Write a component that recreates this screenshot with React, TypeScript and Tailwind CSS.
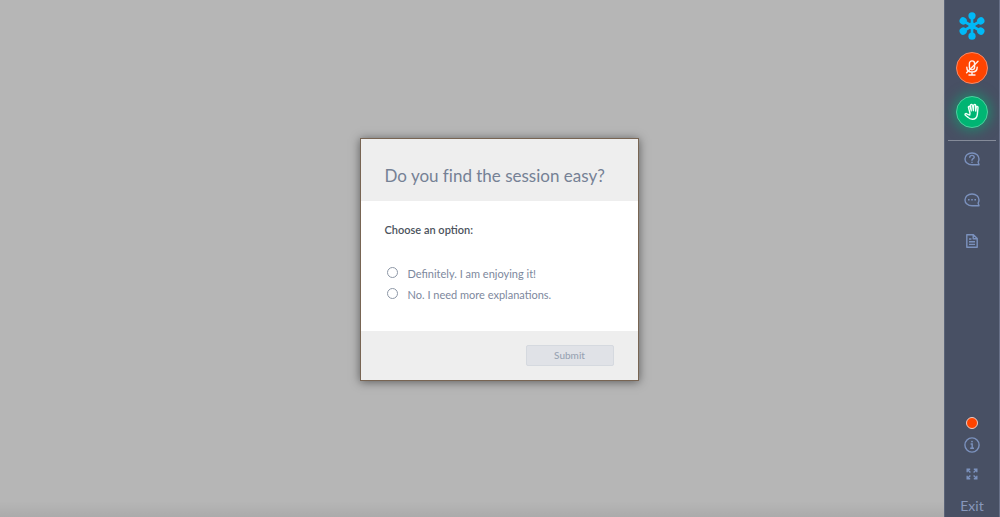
import React, { useState } from 'react';

const OPTIONS = [
  { id: 'yes', label: 'Definitely. I am enjoying it!' },
  { id: 'no', label: 'No. I need more explanations.' },
];

const LogoIcon = () => (
  <svg viewBox="0 0 26 28" className="w-[26px] h-7" fill="#00b9f7" stroke="#00b9f7" aria-hidden="true">
    {[0, 60, 120, 180, 240, 300].map(angle => (
      <g key={angle} transform={`rotate(${angle} 13 14)`}>
        <path d="M13 14V4" strokeWidth="2.6" />
        <circle cx="13" cy="3.8" r="3.6" stroke="none" />
      </g>
    ))}
    <circle cx="13" cy="14" r="3.4" stroke="none" />
  </svg>
);

const MicOffIcon = () => (
  <svg viewBox="0 0 16 16" className="w-4 h-4" fill="none" stroke="#fff1ec" strokeWidth="1.4" strokeLinecap="round" aria-hidden="true">
    <rect x="5.4" y="0.9" width="5.2" height="8.8" rx="2.6" />
    <path d="M2.8 7.2c0 3 2 4.8 5.2 4.8s5.2-1.8 5.2-4.8M8 12v2.8M5 15h6" />
    <path d="M14 1.2L2.6 12.8" />
  </svg>
);

const HandIcon = () => (
  <svg viewBox="0 0 16 18" className="w-4 h-[18px]" fill="none" stroke="#f0fff8" strokeWidth="1.4" strokeLinecap="round" strokeLinejoin="round" aria-hidden="true">
    <path d="M6 10.2L4.5 4.6c-.4-1.4 1.3-1.9 1.7-.5l1.1 3.7L6.6 2.6c-.2-1.5 1.7-1.7 2-.3l.8 5.3.3-5.2c.1-1.4 2-1.3 2 .1v5.6l.5-3.6c.2-1.4 1.9-1.2 1.8.2l-.7 6.9c-.4 3-2 4.7-4.9 4.7-1.9 0-3.1-.6-4.3-1.9L1.4 12.3c-.9-1.1.4-2.2 1.5-1.5l2.8 1.3z" />
  </svg>
);

const QuestionIcon = () => (
  <svg viewBox="0 0 16 14" className="w-4 h-3.5" fill="none" stroke="currentColor" strokeWidth="1.4" strokeLinecap="round" strokeLinejoin="round" aria-hidden="true">
    <path d="M15 12.8H8C3.8 12.8 1 10.2 1 6.9S3.8 1 8 1s7 2.6 7 5.9c0 1.4-.4 2.4-.9 3.2z" />
    <path d="M5.8 5.2c0-2.5 4.4-2.5 4.4 0C10.2 6.8 8 6.6 8 8.2M8 10.3v.1" />
  </svg>
);

const ChatIcon = () => (
  <svg viewBox="0 0 16 14" className="w-4 h-3.5" fill="none" stroke="currentColor" strokeWidth="1.4" strokeLinejoin="round" aria-hidden="true">
    <path d="M15 12.8H8C3.8 12.8 1 10.2 1 6.9S3.8 1 8 1s7 2.6 7 5.9c0 1.4-.4 2.4-.9 3.2z" />
    <path d="M4 6.7h1.6M7.2 6.7h1.6M10.4 6.7h1.6" />
  </svg>
);

const DocumentIcon = () => (
  <svg viewBox="0 0 12 14" className="w-3 h-3.5" fill="none" stroke="currentColor" strokeWidth="1.4" strokeLinejoin="round" aria-hidden="true">
    <path d="M.8.8h6.6l3.8 3.8v8.6H.8zM7.2.8v4h4" />
    <path d="M3 5h2.4M3 7.8h6M3 10.4h6" />
  </svg>
);

const InfoIcon = () => (
  <svg viewBox="0 0 16 16" className="w-4 h-4" fill="none" stroke="currentColor" strokeWidth="1.4" aria-hidden="true">
    <circle cx="8" cy="8" r="7.1" />
    <path d="M6.6 7h1.6v4M6.2 11.2h3.8" />
    <circle cx="8" cy="4.6" r=".9" fill="currentColor" stroke="none" />
  </svg>
);

const ExpandIcon = () => (
  <svg viewBox="0 0 12 12" className="w-3 h-3" fill="none" stroke="currentColor" strokeWidth="1.4" aria-hidden="true">
    <path d="M1.2 4.2v-3h3M1.4 1.4l3 3M7.8 1.2h3v3M10.6 1.4l-3 3M1.2 7.8v3h3M1.4 10.6l3-3M10.8 7.8v3h-3M10.6 10.6l-3-3" />
  </svg>
);

const SideButton = ({ label, children }: { label: string; children: React.ReactNode }) => (
  <button type="button" aria-label={label} className="flex h-4 w-full items-center justify-center text-[#7b91bd]">
    {children}
  </button>
);

const Sidebar = () => (
  <aside className="flex w-14 shrink-0 flex-col items-center justify-between border-x border-l-[#5b6478] border-r-[#687087] bg-[#485064] px-[3px] pt-3">
    <div className="flex w-full flex-col items-center">
      <LogoIcon />
      <button type="button" aria-label="Unmute" className="mt-3 flex h-8 w-8 items-center justify-center rounded-full border border-[#f98a66] bg-[#ff4400]">
        <MicOffIcon />
      </button>
      <button type="button" aria-label="Lower hand" className="mt-3 flex h-8 w-8 items-center justify-center rounded-full border border-[#4fcf9f] bg-[#00b573] shadow-[0_0_12px_3px_rgba(0,181,115,0.5)]">
        <HandIcon />
      </button>
      <hr className="mt-3 w-full border-[#858b99]" />
      <nav className="mt-2.5 flex w-full flex-col gap-[25px]">
        <SideButton label="Questions"><QuestionIcon /></SideButton>
        <SideButton label="Chat"><ChatIcon /></SideButton>
        <SideButton label="Handouts"><DocumentIcon /></SideButton>
      </nav>
    </div>

    <div className="flex w-full flex-col items-center">
      <span className="mb-2 h-3 w-3 rounded-full border border-[#eccdc6] bg-[#ff4400]"></span>
      <SideButton label="Session info"><InfoIcon /></SideButton>
      <div className="mt-[13px] w-full">
        <SideButton label="Full screen"><ExpandIcon /></SideButton>
      </div>
      <button type="button" className="mt-3 text-[14px] leading-[23px] text-[#8797bb]">Exit</button>
    </div>
  </aside>
);

const PollDialog = () => {
  const [selected, setSelected] = useState('');

  return (
    <form
      role="dialog"
      aria-labelledby="poll-title"
      onSubmit={e => e.preventDefault()}
      className="w-[279px] border border-[#786553] bg-white shadow-[0_1px_9px_rgba(0,0,0,0.5)]"
    >
      <header className="bg-[#eeeeee] px-6 pt-[25px] pb-[13px]">
        <h1 id="poll-title" className="whitespace-nowrap text-[17px] leading-6 text-[#758195] [font-variant-ligatures:none]">Do you find the session easy?</h1>
      </header>

      <fieldset className="px-6 pt-5 pb-[25px]">
        <legend className="float-left w-full text-[11px] leading-[18px] font-semibold text-[#4c535d]">Choose an option:</legend>
        <div className="clear-both pt-[25px]">
          {OPTIONS.map(option => (
            <label key={option.id} className="flex h-[21px] items-start gap-2.5 text-[11px] leading-5 text-[#7d889d]">
              <input
                type="radio"
                name="poll"
                value={option.id}
                checked={selected === option.id}
                onChange={() => setSelected(option.id)}
                className="mt-[3px] ml-0.5 h-[11px] w-[11px] appearance-none rounded-full border border-[#8d97a6] bg-white checked:border-4"
              />
              {option.label}
            </label>
          ))}
        </div>
      </fieldset>

      <footer className="flex justify-end bg-[#eeeeee] px-6 py-3.5">
        <button type="submit" disabled={!selected} className="h-[21px] w-22 rounded-xs border border-[#d5d9df] bg-[#e0e2e7] text-[10px] font-medium text-[#98a2b3]">
          Submit
        </button>
      </footer>
    </form>
  );
};

const App: React.FC = () => (
  <div className="flex min-h-screen font-['Lato','Liberation_Sans',sans-serif]">
    <main className="flex flex-1 flex-col bg-[#b6b6b6]">
      <div className="flex flex-1 items-center justify-center pt-0.5 pl-[54px]">
        <PollDialog />
      </div>
      <div className="-mt-4 h-4 bg-gradient-to-b from-transparent to-black/6"></div>
    </main>
    <Sidebar />
  </div>
);

export default App;
